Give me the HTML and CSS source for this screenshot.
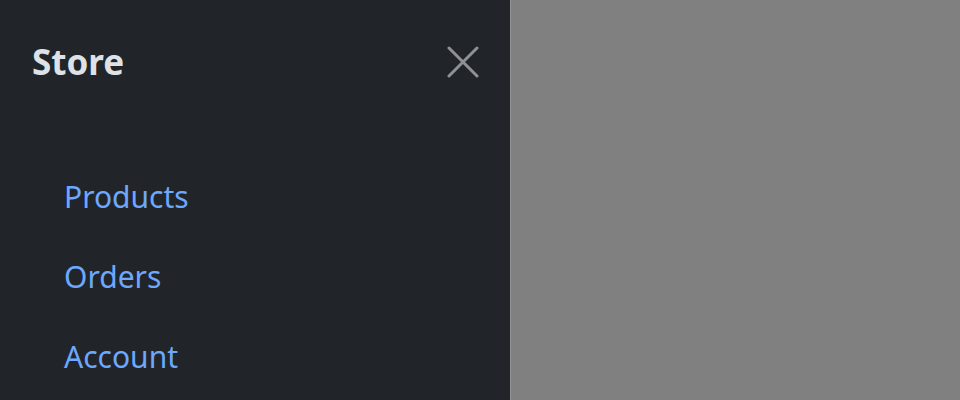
FILE: index.html
```html
<!DOCTYPE html>
<html lang="en">
<head>
<meta charset="utf-8">
<title>Store</title>
<link rel="stylesheet" href="styles.css">
</head>
<body>
<aside class="offcanvas">
  <header class="offcanvas-header">
    <h5 class="offcanvas-title">Store</h5>
    <button class="btn-close" type="button" aria-label="Close">
      <svg viewBox="0 0 32 32" width="32" height="32" aria-hidden="true">
        <path d="M2 2 L30 30 M30 2 L2 30" fill="none" stroke="currentColor" stroke-width="3" stroke-linecap="round"/>
      </svg>
    </button>
  </header>
  <nav class="offcanvas-body">
    <ul class="nav-list">
      <li><a href="#" class="nav-link">Products</a></li>
      <li><a href="#" class="nav-link">Orders</a></li>
      <li><a href="#" class="nav-link">Account</a></li>
    </ul>
  </nav>
</aside>
<div class="backdrop"></div>
</body>
</html>
```

FILE: styles.css
```css
* { box-sizing: border-box; }
html, body { height: 100%; }
body {
  margin: 0;
  display: flex;
  background: #808080;
  font-family: "Noto Sans", "Open Sans", sans-serif;
  overflow: hidden;
}
.offcanvas {
  width: 511px;
  height: 400px;
  flex: none;
  background: #212529;
  border-right: 1px solid #939393;
  color: #dee2e6;
  display: flex;
  flex-direction: column;
}
.offcanvas-header {
  display: flex;
  align-items: center;
  justify-content: space-between;
  padding: 41px 31px 41px 32px;
}
.offcanvas-title {
  margin: 0;
  font-size: 35px;
  line-height: 42px;
  font-weight: 700;
  color: #dee2e6;
}
.btn-close {
  width: 32px;
  height: 32px;
  padding: 0;
  border: 0;
  background: none;
  color: #8f9194;
  display: block;
  cursor: pointer;
}
.btn-close svg { display: block; }
.offcanvas-body {
  padding: 33px 0 0 64px;
}
.nav-list {
  list-style: none;
  margin: 0;
  padding: 0;
}
.nav-link {
  display: block;
  font-size: 30px;
  line-height: 80px;
  color: #6ea8fe;
  text-decoration: none;
}
.backdrop { flex: 1; }
```
